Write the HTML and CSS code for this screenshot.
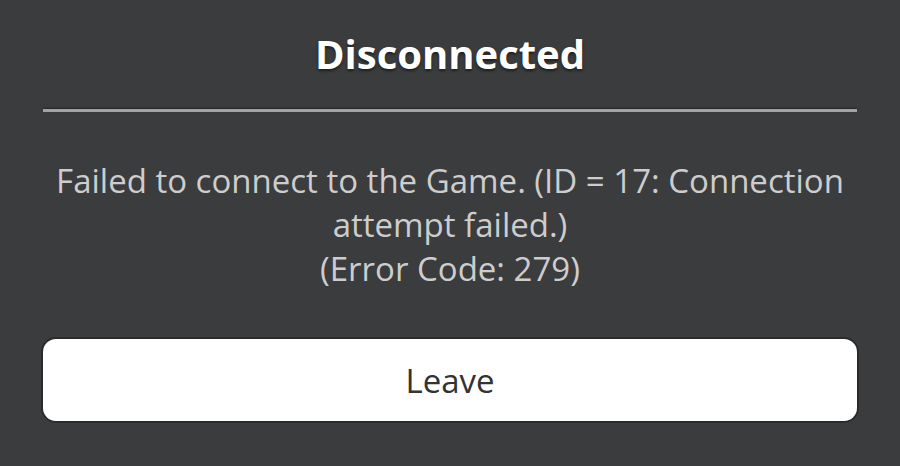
FILE: index.html
```html
<!DOCTYPE html>
<html lang="en">
<head>
  <meta charset="UTF-8">
  <title>Disconnected</title>
  <link rel="stylesheet" href="styles.css">
</head>
<body>
  <div class="prompt">
    <h1 class="title">Disconnected</h1>
    <hr class="divider">
    <p class="message">Failed to connect to the Game. (ID = 17: Connection attempt failed.)<br>(Error Code: 279)</p>
    <button class="leave">Leave</button>
  </div>
</body>
</html>
```

FILE: styles.css
```css
* {
  box-sizing: border-box;
  margin: 0;
  padding: 0;
}

body {
  background: #3b3c3e;
  font-family: "Open Sans", "Noto Sans", sans-serif;
  height: 466px;
  overflow: hidden;
}

.prompt {
  padding: 24px 43px 0 43px;
  display: flex;
  flex-direction: column;
  align-items: center;
}

.title {
  color: #fff;
  font-size: 40px;
  font-weight: 700;
  line-height: 60px;
  text-shadow: 0 2px 3px rgba(0, 0, 0, 0.5);
}

.divider {
  width: 100%;
  border: none;
  height: 3px;
  background: #a3a3a3;
  margin-top: 25px;
  box-shadow: 0 -1px 2px rgba(0, 0, 0, 0.4);
}

.message {
  color: #cdcdcd;
  font-size: 33px;
  line-height: 44px;
  text-align: center;
  margin-top: 47px;
  padding: 0 4px;
}

.leave {
  margin-top: 48px;
  width: 814px;
  height: 82px;
  background: #fff;
  border: none;
  border-radius: 13px;
  box-shadow: 0 0 0 2px #2a2b2c;
  font-family: inherit;
  font-size: 33px;
  color: #333;
}
```
